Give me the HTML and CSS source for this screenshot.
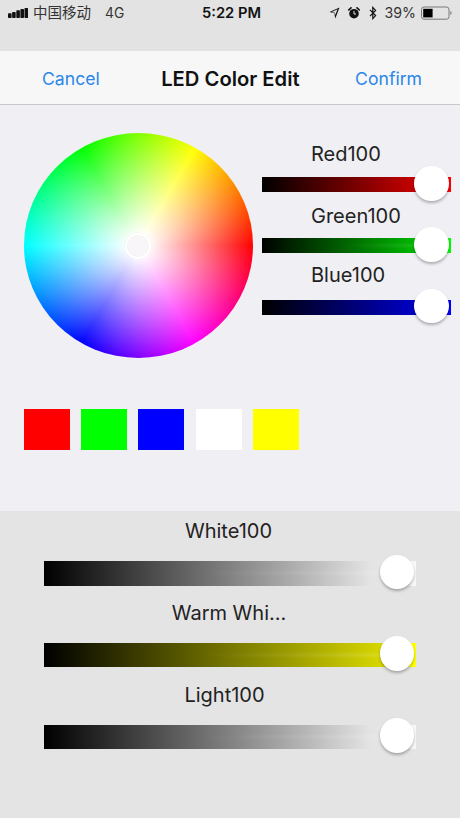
FILE: index.html
```html
<!DOCTYPE html>
<html lang="en">
<head>
<meta charset="utf-8">
<title>LED Color Edit</title>
<link rel="stylesheet" href="styles.css">
</head>
<body>
<div class="status">
  <div class="status-left">
    <svg class="signal" width="20" height="10" viewBox="0 0 20 10"><rect x="0" y="5.2" width="3.6" height="4.8" rx=".8"/><rect x="4.1" y="4" width="3.6" height="6" rx=".8"/><rect x="8.3" y="2.2" width="3.6" height="7.8" rx=".8"/><rect x="12.4" y="1" width="3.6" height="9" rx=".8"/><rect x="16.5" y="0" width="3.6" height="10" rx=".8"/></svg>
    <span class="carrier">中国移动</span>
    <span class="net">4G</span>
  </div>
  <div class="time">5:22 PM</div>
  <div class="status-right">
    <svg class="i-loc" width="11" height="12" viewBox="0 0 11 12"><path d="M10.5 .5 L.5 5 L5.2 6 L6.3 11.5 Z M8.6 2.3 L6 8.2 L5.6 5.5 L2.9 5 Z" fill-rule="evenodd"/></svg>
    <svg class="i-alarm" width="12" height="12" viewBox="0 0 12 12"><circle cx="6" cy="6.7" r="4.8"/><path d="M.6 3 L3 .8 M11.4 3 L9 .8" stroke="#111" stroke-width="1.6" stroke-linecap="round"/><path d="M6 4 V7 H8" stroke="#e3e3e3" stroke-width="1" fill="none"/></svg>
    <svg class="i-bt" width="8" height="14" viewBox="0 0 8 14"><path d="M1 3.8 L6.6 9.6 L3.8 12.6 V1.4 L6.6 4.4 L1 10.2" fill="none" stroke="#111" stroke-width="1.2"/></svg>
    <span class="pct">39%</span>
    <svg class="i-batt" width="31" height="14" viewBox="0 0 31 14"><rect x=".5" y="1" width="27.5" height="12.2" rx="2.5" fill="none" stroke="#777" stroke-width="1"/><rect x="2.2" y="2.8" width="9.4" height="8.6" fill="#000"/><path d="M29.4 5 C30.2 5.5 30.6 6 30.6 7 C30.6 8 30.2 8.5 29.4 9 Z" fill="#777"/></svg>
  </div>
</div>

<div class="nav">
  <span class="nav-btn">Cancel</span>
  <span class="nav-title">LED Color Edit</span>
  <span class="nav-btn">Confirm</span>
</div>

<main class="panel">
  <div class="picker">
    <div class="wheel"><div class="wheel-knob"></div></div>
    <div class="rgb">
      <div class="rgb-row rgb-row-red">
        <div class="rgb-label">Red100</div>
        <div class="rgb-track t-red"><span class="thumb"></span></div>
      </div>
      <div class="rgb-row rgb-row-green">
        <div class="rgb-label">Green100</div>
        <div class="rgb-track t-green"><i class="sheen sheen-sm"></i><span class="thumb"></span></div>
      </div>
      <div class="rgb-row rgb-row-blue">
        <div class="rgb-label">Blue100</div>
        <div class="rgb-track t-blue"><span class="thumb"></span></div>
      </div>
    </div>
  </div>
  <div class="swatches">
    <span class="swatch s-red"></span>
    <span class="swatch s-green"></span>
    <span class="swatch s-blue"></span>
    <span class="swatch s-white"></span>
    <span class="swatch s-yellow"></span>
  </div>
</main>

<section class="lower">
  <div class="l-row">
    <div class="l-label l-label-white">White100</div>
    <div class="l-track t-white"><i class="sheen"></i><span class="thumb thumb-lg"></span></div>
  </div>
  <div class="l-row">
    <div class="l-label l-label-warm">Warm Whi...</div>
    <div class="l-track t-warm"><i class="sheen"></i><span class="thumb thumb-lg"></span></div>
  </div>
  <div class="l-row">
    <div class="l-label l-label-light">Light100</div>
    <div class="l-track t-white"><i class="sheen"></i><span class="thumb thumb-lg"></span></div>
  </div>
</section>
</body>
</html>
```
FILE: styles.css
```css
* { box-sizing: border-box; }
html, body { margin: 0; padding: 0; }
body {
  width: 460px;
  height: 818px;
  overflow: hidden;
  background: #e4e4e4;
  color: #111;
  font-family: Inter, "Noto Sans CJK SC", "Liberation Sans", sans-serif;
  display: flex;
  flex-direction: column;
}

.status {
  height: 51px;
  flex: none;
  background: #e3e3e3;
  display: grid;
  grid-template-columns: 1fr auto 1fr;
  align-items: start;
  padding: 4px 8px 0 8px;
  font-size: 14px;
  line-height: 18px;
  color: #222;
}
.status-left, .status-right { display: flex; align-items: center; height: 18px; }
.status-right { justify-content: flex-end; }
.signal { fill: #111; margin-right: 5px; }
.carrier { font-size: 14.5px; color: #333; }
.net { margin-left: 14px; font-size: 13.8px; color: #333; }
.time { font-weight: 600; font-size: 14.7px; color: #111; padding-left: 3px; }
.i-loc { fill: #111; margin-right: 8px; }
.i-alarm { fill: #111; margin-right: 8.5px; }
.i-bt { margin-right: 8px; }
.pct { font-size: 14.2px; color: #333; margin-right: 5px; }

.nav {
  height: 54px;
  flex: none;
  background: #f7f7f7;
  border-bottom: 1px solid #c9c9cc;
  display: flex;
  align-items: center;
  justify-content: space-between;
  padding: 1px 38px 0 42px;
}
.nav-btn { font-size: 17.6px; color: #2a86e9; }
.nav-title { font-size: 20.2px; font-weight: 600; color: #111; margin-left: 6px; }

.panel {
  height: 406px;
  flex: none;
  background: #efeff4;
  padding: 28px 9px 0 24px;
}
.picker { display: flex; }
.wheel {
  position: relative;
  width: 229px;
  height: 225px;
  flex: none;
  border-radius: 50%;
  filter: blur(.4px);
  background:
    radial-gradient(closest-side, #fff 0, #fff 8%, rgba(255,255,255,0) 100%),
    conic-gradient(from 90deg, #f00, #f0f, #00f, #0ff, #0f0, #ff0, #f00);
}
.wheel-knob {
  position: absolute;
  left: 101px;
  top: 100px;
  width: 25.5px;
  height: 25.5px;
  border: 2.5px solid #fff;
  border-radius: 50%;
  background: rgba(238,232,238,.4);
  box-shadow: 0 0 0 .5px rgba(235,225,235,.5);
  filter: blur(.5px);
}
.rgb { margin-left: 9px; width: 189px; }
.rgb-label { font-size: 20px; line-height: 24px; padding-left: 49px; color: #222; }
.rgb-row-red { padding-top: 9px; }
.rgb-row-red .rgb-label { margin-bottom: 11.3px; }
.rgb-row-green { padding-top: 12px; }
.rgb-row-green .rgb-label { margin-bottom: 10px; }
.rgb-row-blue { padding-top: 10px; }
.rgb-row-blue .rgb-label { margin-bottom: 12.5px; }
.rgb-track { position: relative; height: 15px; }
.t-red { background: linear-gradient(90deg, #000, #e00 97%, #f00 97%); }
.t-green { background: linear-gradient(90deg, #000, #0d0 97%, #0f0 97%); }
.t-blue { background: linear-gradient(90deg, #000, #00e 97%, #00f 97%); }
.thumb {
  position: absolute;
  right: 2px;
  top: -11px;
  width: 34.7px;
  height: 34.7px;
  border-radius: 50%;
  background: #fff;
  box-shadow: 0 2px 3px rgba(0,0,0,.28);
}

.swatches { display: flex; gap: 11.2px; margin: 51px 0 0 -.5px; }
.swatch { width: 46.2px; height: 41px; flex: none; }
.s-red { background: #f00; }
.s-green { background: #0f0; }
.s-blue { background: #00f; }
.s-white { background: #fff; }
.s-yellow { background: #ff0; }

.lower {
  flex: 1;
  background: #e4e4e4;
  padding: 8px 44px 0;
}
.l-row { height: 81.75px; }
.l-label { font-size: 20px; line-height: 24px; text-align: center; color: #222; margin-bottom: 18px; }
.l-label-white { padding-right: 3px; }
.l-label-warm { padding-right: 2px; }
.l-label-light { padding-right: 11px; }
.l-track { position: relative; height: 24.5px; }
.t-white { background: linear-gradient(90deg, #000, #e4e4e4 88%, #e8e8e8 98.5%, #f8f8f8 98.5%); }
.t-warm { background: linear-gradient(90deg, #000, #e8e800 98%, #ff0 98%); }
.sheen {
  position: absolute;
  left: 40%;
  right: 5px;
  top: 10px;
  height: 4px;
  background: linear-gradient(90deg, rgba(255,255,255,0), rgba(255,255,255,.14));
  filter: blur(.8px);
}
.sheen-sm { top: 6px; height: 3px; }
.thumb-lg {
  right: 1.7px;
  top: -6.5px;
  width: 34.8px;
  height: 34.8px;
}
```
